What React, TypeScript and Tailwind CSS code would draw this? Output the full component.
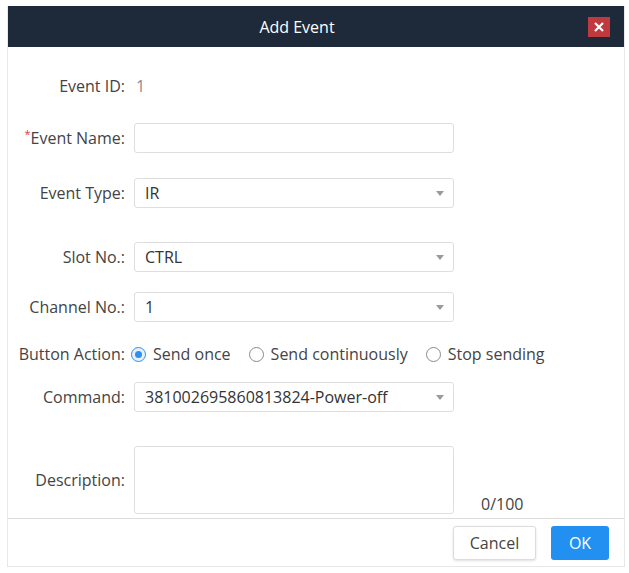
import React from "react";

function Arrow() {
  return (
    <svg width="8" height="5" viewBox="0 0 8 5" className="text-[#9a9a9a]">
      <path d="M0 0 L8 0 L4 5 Z" fill="currentColor" />
    </svg>
  );
}

function Row({
  label,
  required,
  children,
  className,
}: {
  label: string;
  required?: boolean;
  children: React.ReactNode;
  className?: string;
}) {
  return (
    <div className={"flex items-center " + (className ?? "")}>
      <div className="w-[117px] shrink-0 text-right text-[#444]">
        {required && <span className="text-[#e0393e] text-[11px] align-top">*</span>}
        {label}
      </div>
      <div className="ml-[9px]">{children}</div>
    </div>
  );
}

function Select({ value }: { value: string }) {
  return (
    <div className="w-[320px] h-[30px] border border-[#dedede] rounded-[3px] flex items-center justify-between pl-[10px] pr-[9px] text-[#333]">
      <span>{value}</span>
      <Arrow />
    </div>
  );
}

function Radio({ label, checked }: { label: string; checked?: boolean }) {
  return (
    <label className="flex items-center gap-[7px] text-[#444]">
      {checked ? (
        <span className="w-[15px] h-[15px] rounded-full border border-[#2f8ff0] bg-[#e6f1fd] flex items-center justify-center">
          <span className="w-[7px] h-[7px] rounded-full bg-[#2f8ff0]" />
        </span>
      ) : (
        <span className="w-[15px] h-[15px] rounded-full border border-[#8a8a8a]" />
      )}
      {label}
    </label>
  );
}

export default function App() {
  return (
    <div
      className="w-[629px] h-[573px] bg-white pt-[6px] pl-[7px] text-[16px]"
      style={{ fontFamily: '"Open Sans", "Noto Sans", sans-serif' }}
    >
      <div className="w-[618px] h-[561px] border border-[#e8e8e8] border-t-0 flex flex-col">
        {/* header */}
        <div className="h-[41px] bg-[#1e2a3a] flex items-center shrink-0">
          <div className="flex-1 text-center text-white text-[16px] -ml-[2px]">
            Add Event
          </div>
          <button className="w-[22px] h-[20px] bg-[#c0393f] flex items-center justify-center mr-[14px]">
            <svg width="10" height="10" viewBox="0 0 10 10">
              <path d="M1 1 L9 9 M9 1 L1 9" stroke="white" strokeWidth="2.2" />
            </svg>
          </button>
        </div>

        {/* form */}
        <div className="flex flex-col pt-[24px]">
          <Row label="Event ID:" className="h-[30px]">
            <span className="text-[#8a8a8a] pl-[2px]">1</span>
          </Row>
          <Row label="Event Name:" required className="mt-[22px]">
            <div className="w-[320px] h-[30px] border border-[#dedede] rounded-[3px]" />
          </Row>
          <Row label="Event Type:" className="mt-[25px]">
            <Select value="IR" />
          </Row>
          <Row label="Slot No.:" className="mt-[34px]">
            <Select value="CTRL" />
          </Row>
          <Row label="Channel No.:" className="mt-[20px]">
            <Select value="1" />
          </Row>
          <div className="flex items-center h-[24px] mt-[20px]">
            <div className="w-[117px] shrink-0 text-right text-[#444]">Button Action:</div>
            <div className="ml-[6px] flex items-center gap-[18px]">
              <Radio label="Send once" checked />
              <Radio label="Send continuously" />
              <Radio label="Stop sending" />
            </div>
          </div>
          <Row label="Command:" className="mt-[16px]">
            <Select value="381002695860813824-Power-off" />
          </Row>
          <div className="flex items-end mt-[34px]">
            <div className="w-[117px] shrink-0 text-right text-[#444] self-center">Description:</div>
            <div className="ml-[9px] w-[320px] h-[68px] border border-[#dedede] rounded-[3px]" />
            <div className="ml-[27px] text-[#444] leading-none mb-[2px]">0/100</div>
          </div>
        </div>

        {/* footer */}
        <div className="mt-[4px] border-t border-[#dcdcdc] flex-1 flex items-center justify-end gap-[15px] pr-[15px]">
          <button className="w-[83px] h-[34px] border border-[#dcdcdc] rounded-[3px] bg-white text-[#444] shadow-sm">
            Cancel
          </button>
          <button className="w-[58px] h-[34px] rounded-[3px] bg-[#2190f0] text-white">OK</button>
        </div>
      </div>
    </div>
  );
}
